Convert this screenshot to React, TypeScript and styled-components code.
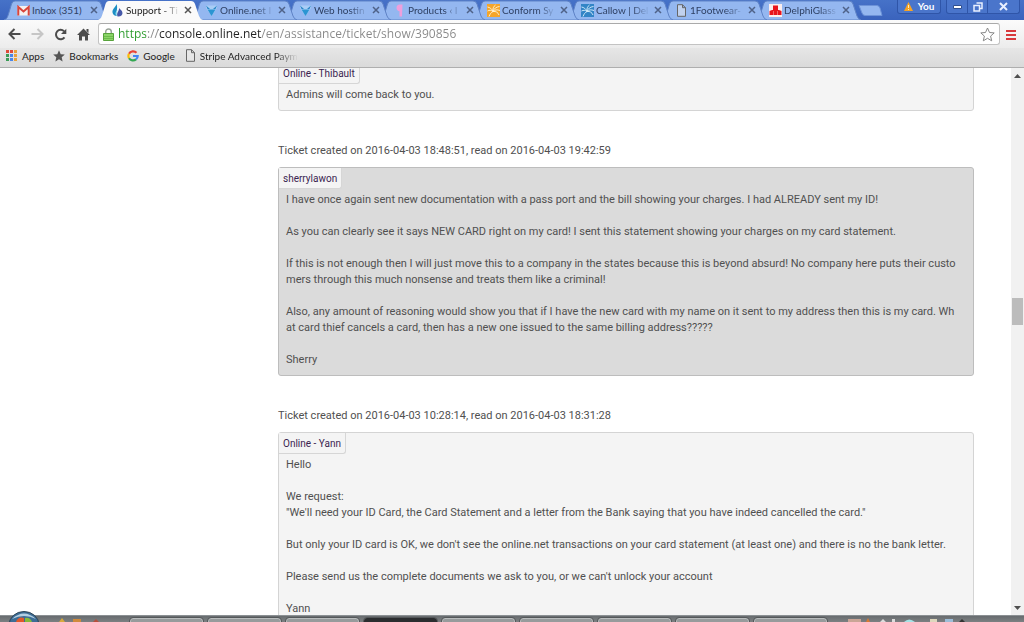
import React from "react";
import styled, { createGlobalStyle } from "styled-components";

const GlobalStyle = createGlobalStyle`
  * { box-sizing: border-box; }
  body { margin: 0; background: #fff; font-family: Lato, "Open Sans", sans-serif; }
  button { border: 0; padding: 0; background: none; font: inherit; color: inherit; }
`;

const Screen = styled.div`
  display: flex;
  flex-direction: column;
  height: 100vh;
  overflow: hidden;
`;

/* ---------- tab strip ---------- */

const TabStrip = styled.header`
  display: flex;
  flex: none;
  height: 20px;
  padding-left: 4px;
  background: linear-gradient(#4672c8, #3a63bd);
`;

const TabList = styled.div`
  display: flex;
  isolation: isolate;
`;

const TabItem = styled.div<{ $active?: boolean; $level: number }>`
  position: relative;
  z-index: ${(p) => (p.$active ? 20 : p.$level)};
  display: flex;
  align-items: center;
  flex: none;
  width: 106px;
  height: 20px;
  margin-right: -12px;
  padding: 0 10px 0 13px;
  color: ${(p) => (p.$active ? "#222" : "#2f4164")};
`;

const TabShape = styled.svg`
  position: absolute;
  inset: 0;
  z-index: -1;
`;

const Favicon = styled.svg`
  flex: none;
  width: 13px;
  height: 13px;
`;

const TabTitle = styled.button<{ $faded: boolean }>`
  flex: 1;
  min-width: 0;
  margin-left: 2px;
  white-space: nowrap;
  text-align: left;
  font-size: 10px;
  line-height: 16px;
  ${(p) => p.$faded && "mask-image: linear-gradient(90deg, #000 36px, transparent 54px);"}
`;

const CloseButton = styled.button`
  display: flex;
  flex: none;
  padding: 2px;
`;

const NewTab = styled.button`
  display: flex;
  align-self: flex-start;
  margin: 5px 0 0 8px;
`;

const WindowControls = styled.div`
  display: flex;
  align-items: flex-start;
  gap: 5px;
  margin-left: auto;
  padding-right: 4px;
`;

const ControlGroup = styled.div`
  display: flex;
  height: 14px;
  border: 1px solid #2f55a8;
  border-top: 0;
  border-radius: 0 0 3px 3px;
  background: #4a75cb;
`;

const ControlButton = styled.button<{ $width: number }>`
  display: flex;
  align-items: center;
  justify-content: center;
  gap: 5px;
  width: ${(p) => p.$width}px;
  height: 13px;
  color: #fff;
  font-size: 10px;
  font-weight: 700;
  line-height: 13px;

  & + & { border-left: 1px solid #2f55a8; }
`;

/* ---------- toolbar ---------- */

const Toolbar = styled.div`
  display: flex;
  align-items: center;
  flex: none;
  height: 28px;
  padding: 0 6px 0 3px;
  background: linear-gradient(#fbfbfb, #ececec);
`;

const ToolButton = styled.button`
  display: flex;
  align-items: center;
  justify-content: center;
  flex: none;
  width: 23px;
  height: 20px;
`;

const AddressBar = styled.label`
  display: flex;
  align-items: center;
  flex: 1;
  height: 22px;
  margin: 0 5px 0 3px;
  padding: 0 4px;
  border: 1px solid #c3c3c3;
  border-top-color: #aaa;
  border-radius: 3px;
  background: #fff;
`;

const UrlInput = styled.input`
  flex: 1;
  min-width: 0;
  margin: 0 0 0 4px;
  padding: 0;
  border: 0;
  outline: 0;
  font-family: "Open Sans", sans-serif;
  font-size: 12px;
  line-height: 18px;
  color: transparent;
  background: linear-gradient(90deg, #2a9a2a 28px, #888 28px 40px, #222 40px 143px, #888 143px);
  background-clip: text;
`;

const BookmarksBar = styled.nav`
  display: flex;
  align-items: center;
  flex: none;
  gap: 9px;
  height: 20px;
  padding: 0 6px 4px;
  border-bottom: 1px solid #aeaeae;
  background: linear-gradient(#e6e6e6, #dadada);
`;

const Bookmark = styled.a<{ $faded?: boolean }>`
  display: flex;
  align-items: center;
  gap: 4px;
  font-size: 10px;
  line-height: 14px;
  color: #222;
  text-decoration: none;
  white-space: nowrap;
  ${(p) => p.$faded && "mask-image: linear-gradient(90deg, #000 80%, transparent 100%);"}
`;

/* ---------- page ---------- */

const Viewport = styled.div`
  display: flex;
  flex: 1;
  min-height: 0;
`;

const Page = styled.main`
  flex: 1;
  min-width: 0;
  overflow: hidden;
  padding: 0 37px 0 278px;
  font-family: Roboto, sans-serif;
`;

const Thread = styled.div`
  display: flex;
  flex-direction: column;
  margin-top: -6px;
`;

const TicketDate = styled.p`
  margin: 32px 0 8px;
  font-size: 11px;
  line-height: 16px;
  color: #505050;
`;

const Message = styled.article<{ $own?: boolean }>`
  display: flex;
  flex-direction: column;
  align-items: flex-start;
  gap: 3px;
  padding-bottom: 7px;
  border: 1px solid ${(p) => (p.$own ? "#bdbdbd" : "#d4d4d4")};
  border-radius: 3px;
  background: ${(p) => (p.$own ? "#dbdbdb" : "#f4f4f4")};
`;

const Author = styled.h2`
  height: 21px;
  margin: 0;
  padding: 0 4px;
  border: solid #d6d6d6;
  border-width: 0 1px 1px 0;
  border-radius: 0 0 3px 0;
  background: #f4f4f4;
  font-size: 10px;
  font-weight: 400;
  line-height: 21px;
  color: #3a2450;
`;

const Body = styled.p`
  margin: 0;
  padding: 0 7px;
  font-size: 11px;
  line-height: 16px;
  color: #505050;
  white-space: pre;
`;

const Scrollbar = styled.div`
  display: flex;
  flex-direction: column;
  align-items: center;
  flex: none;
  width: 13px;
  padding: 6px 0 5px;
  background: #f1f1f1;
`;

const Thumb = styled.div`
  width: 11px;
  height: 27px;
  background: #bcbcbc;
`;

const Track = styled.div<{ $grow: number }>`
  flex: ${(p) => p.$grow};
`;

/* ---------- taskbar ---------- */

const Taskbar = styled.footer`
  position: relative;
  display: flex;
  flex: none;
  gap: 5px;
  height: 7px;
  padding: 2px 0 0 130px;
  border-top: 1px solid #8b9093;
  background: linear-gradient(#686c6f, #7c8082);
`;

const TaskButton = styled.button<{ $dark?: boolean }>`
  flex: none;
  width: 73px;
  height: 6px;
  border: 1px solid ${(p) => (p.$dark ? "#2b2d2f" : "#b9bcbd")};
  border-bottom: 0;
  border-radius: 3px 3px 0 0;
  outline: 1px solid #54585a;
  background: ${(p) => (p.$dark ? "#2b2d2f" : "#979b9c")};
`;

const StartOrb = styled.svg`
  position: absolute;
  left: 8px;
  bottom: 0;
`;

const TaskIcons = styled.svg<{ $side: "left" | "right"; $offset: number }>`
  position: absolute;
  bottom: 0;
  ${(p) => p.$side}: ${(p) => p.$offset}px;
`;

/* ---------- drawings ---------- */

const palm = "M2 12.500C3 10 4 8.500 6 7.500M6 7.500C9 7 11 8.500 12 11M6 7.500C8 5.500 10 5.500 13 6.500M6 7.500C7 4.500 9 3 12.500 2.500M6 7.500C5.500 4.500 6.500 2.500 8.500 1M6 7.500C4.500 4.500 3 3.500 .5 3M6 7.500C4 6 2.500 6 .5 7";

const icons: Record<string, React.ReactNode> = {
  gmail: (
    <>
      <path d="M0.5 2h12v9.500h-12z" fill="#f4f0f0" />
      <path d="M1.300 11.500V3L6.500 7.500L11.700 3v8.500" fill="none" stroke="#d9453b" strokeWidth="2" />
    </>
  ),
  drop: (
    <>
      <path d="M5.500 0C5 3 1 5 1.500 8.500c.3 2.500 2.500 3.500 4.500 3.500C4 9 7.500 5 5.500 0z" fill="#1d8fc4" />
      <path d="M8 4c.5 3-3 4.500-1.500 8.500C10 12.800 11.500 11 11.500 9 11.400 7 9.500 5.500 8 4z" fill="#4558a8" />
      <path d="M6.500 6c0 2-1.500 3-.5 6-2.500-2-1.500-4 .5-6z" fill="#8fe0f5" />
    </>
  ),
  triangle: (
    <>
      <path d="M1 1.500L12 1.500 12 4 6.500 12 1 4z" fill="#a9cdf5" />
      <path d="M1 1.500l4 3.500H2.500z M12 1.500l-4 3.500h2.500z" fill="#2a86c6" />
      <path d="M2.500 5.500h8L6.500 12z" fill="#2b95d2" />
    </>
  ),
  pink: <path d="M9.500 0.500H7C4.500.5 3.500 2 3.500 4s1.500 3 3 3.300V12.500h2.500z" fill="#ee9fdc" />,
  palmOrange: (
    <>
      <path d="M0 0h13v13H0z" fill="#f5a52a" />
      <path d={palm} stroke="#fff0cc" fill="none" />
    </>
  ),
  palmBlue: (
    <>
      <path d="M0 0h13v13H0z" fill="#3385c6" />
      <path d={palm} stroke="#cfe8f8" fill="none" />
    </>
  ),
  page: <path d="M2.500 .7h5l3 3v8.600h-8z M7.500.7v3h3" fill="#ececec" fillOpacity=".5" stroke="#666" />,
  cubes: (
    <>
      <path d="M0 0h13v13H0z" fill="#fbeeee" />
      <path d="M4 1.500h5V6H4z M.5 7L3 6h7l2.500 1v4h-12z" fill="#e8141c" />
      <path d="M4.500 7v4M8.500 7v4" stroke="#f7a0a0" strokeWidth=".6" />
    </>
  ),
};

const tabs = [
  { title: "Inbox (351)", icon: "gmail" },
  { title: "Support - Ti", icon: "drop", active: true },
  { title: "Online.net I", icon: "triangle" },
  { title: "Web hostin", icon: "triangle" },
  { title: "Products ‹ I", icon: "pink" },
  { title: "Conform Sy", icon: "palmOrange" },
  { title: "Callow | Del", icon: "palmBlue" },
  { title: "1Footwear-", icon: "page" },
  { title: "DelphiGlass", icon: "cubes" },
];

const messages = [
  { author: "Online - Thibault", text: "Admins will come back to you." },
  {
    date: "Ticket created on 2016-04-03 18:48:51, read on 2016-04-03 19:42:59",
    author: "sherrylawon",
    own: true,
    text: `I have once again sent new documentation with a pass port and the bill showing your charges. I had ALREADY sent my ID!

As you can clearly see it says NEW CARD right on my card! I sent this statement showing your charges on my card statement.

If this is not enough then I will just move this to a company in the states because this is beyond absurd! No company here puts their custo
mers through this much nonsense and treats them like a criminal!

Also, any amount of reasoning would show you that if I have the new card with my name on it sent to my address then this is my card. Wh
at card thief cancels a card, then has a new one issued to the same billing address?????

Sherry`,
  },
  {
    date: "Ticket created on 2016-04-03 10:28:14, read on 2016-04-03 18:31:28",
    author: "Online - Yann",
    text: `Hello

We request:
"We'll need your ID Card, the Card Statement and a letter from the Bank saying that you have indeed cancelled the card."

But only your ID card is OK, we don't see the online.net transactions on your card statement (at least one) and there is no the bank letter.

Please send us the complete documents we ask to you, or we can't unlock your account

Yann`,
  },
];

const appColors = ["#dd4b39", "#dd4b39", "#e9a23b", "#3a9c57", "#4a86e8", "#e9a23b", "#3a9c57", "#4a86e8", "#e9a23b"];

function BrowserTabs() {
  return (
    <TabStrip>
      <TabList role="tablist">
        {tabs.map((tab, i) => (
          <TabItem key={tab.title} $active={tab.active} $level={10 - i}>
            <TabShape width="106" height="20" aria-hidden="true">
              <path
                d="M0 20C3 19 3.500 17 4.500 14L7.500 4Q8.500 1 11 1H93Q96 1 97 4L101 16Q102 19 105 20Z"
                fill={tab.active ? "#fafafa" : "#94b7f0"}
                stroke={tab.active ? "#fafafa" : "#5f83c6"}
                strokeWidth={tab.active ? 0 : 1}
              />
            </TabShape>
            <Favicon viewBox="0 0 13 13">{icons[tab.icon]}</Favicon>
            <TabTitle role="tab" aria-selected={!!tab.active} $faded={i > 0}>{tab.title}</TabTitle>
            <CloseButton aria-label={`Close ${tab.title}`}>
              <svg width="8" height="8"><path d="M1 1l6 6M7 1L1 7" stroke={tab.active ? "#555" : "#4f6288"} strokeWidth="1.500" /></svg>
            </CloseButton>
          </TabItem>
        ))}
      </TabList>
      <NewTab aria-label="New tab">
        <svg width="25" height="11"><path d="M1 .5H19Q21 .5 22 3L24 10.500H7Q5 10.500 4 8Z" fill="#94b7f0" stroke="#6d93d8" /></svg>
      </NewTab>
      <WindowControls>
        <ControlGroup>
          <ControlButton $width={42}>
            <svg width="9" height="9"><path d="M4.500 0L9 9H0z" fill="#f7a325" /><path d="M4.500 3v3M4.500 7v1" stroke="#fff0c0" /></svg>
            You
          </ControlButton>
        </ControlGroup>
        <ControlGroup>
          <ControlButton $width={20} aria-label="Minimize">
            <svg width="9" height="4"><path d="M.5.5h8v3h-8z" fill="#fff" stroke="#2f4f90" /></svg>
          </ControlButton>
          <ControlButton $width={20} aria-label="Restore">
            <svg width="10" height="10"><path d="M3.500 1H9v5.500H7M1 3.500h5.500V9H1z" fill="none" stroke="#e9f0ff" strokeWidth="1.500" /></svg>
          </ControlButton>
          <ControlButton $width={32} aria-label="Close window">
            <svg width="9" height="9"><path d="M1 1l7 7M8 1L1 8" stroke="#e9f0ff" strokeWidth="2" /></svg>
          </ControlButton>
        </ControlGroup>
      </WindowControls>
    </TabStrip>
  );
}

export default function App() {
  return (
    <Screen>
      <GlobalStyle />
      <BrowserTabs />
      <Toolbar>
        <ToolButton aria-label="Back">
          <svg width="13" height="12"><path d="M12.500 6H2M6.500 1L1.500 6l5 5" fill="none" stroke="#4c4c4c" strokeWidth="2" /></svg>
        </ToolButton>
        <ToolButton aria-label="Forward">
          <svg width="13" height="12"><path d="M.5 6H11M6.500 1l5 5-5 5" fill="none" stroke="#c6c6c6" strokeWidth="2" /></svg>
        </ToolButton>
        <ToolButton aria-label="Reload">
          <svg width="13" height="13"><path d="M10.500 9.300A4.700 4.700 0 1 1 10 3.200" fill="none" stroke="#4c4c4c" strokeWidth="2" /><path d="M12.300 .8V6H7z" fill="#4c4c4c" /></svg>
        </ToolButton>
        <ToolButton aria-label="Home">
          <svg width="13" height="13"><path d="M6.500 .5L13 7h-2v5.500H8V8.500H5v4H2V7H0zM9.500 1H11.500v4l-2-2z" fill="#4c4c4c" /></svg>
        </ToolButton>
        <AddressBar>
          <svg width="11" height="13" aria-hidden="true">
            <path d="M2.700 6V3.800a2.800 2.800 0 0 1 5.600 0V6" fill="none" stroke="#9aa49a" strokeWidth="1.500" />
            <path d="M.5 5.500h10v7H.5z" fill="#8bd468" stroke="#58a33c" />
            <path d="M1 8.500h9M1 10.500h9" stroke="#6dbb4c" />
          </svg>
          <UrlInput aria-label="Address" defaultValue="https://console.online.net/en/assistance/ticket/show/390856" />
          <svg width="15" height="15" aria-hidden="true">
            <path d="M7.500 1l2 4.500 4.700.4-3.600 3.200 1.100 4.700-4.200-2.500-4.200 2.500 1.100-4.700L.8 5.900l4.700-.4z" fill="#fff" stroke="#888" />
          </svg>
        </AddressBar>
        <button aria-label="Menu">
          <svg width="13" height="12"><path d="M1 2h10M1 6h10M1 10h10" stroke="#d8393c" strokeWidth="2" /></svg>
        </button>
      </Toolbar>
      <BookmarksBar>
        <Bookmark href="#apps">
          <svg width="12" height="12">
            {appColors.map((c, i) => <rect key={i} x={(i % 3) * 4} y={Math.floor(i / 3) * 4} width="3" height="3" fill={c} />)}
          </svg>
          Apps
        </Bookmark>
        <Bookmark href="#bookmarks">
          <svg width="12" height="12"><path d="M6 .3l1.700 3.900 4.100.4-3.100 2.700.9 4.200L6 9.300l-3.600 2.200.9-4.200L.2 4.600l4.100-.4z" fill="#555" /></svg>
          Bookmarks
        </Bookmark>
        <Bookmark href="#google">
          <svg width="12" height="12" fill="none" strokeWidth="2.200">
            <path d="M9.500 2.700A4.700 4.700 0 0 0 2 3.800" stroke="#ea4335" />
            <path d="M2 3.800a4.700 4.700 0 0 0 0 4.400" stroke="#fbbc05" />
            <path d="M2 8.200a4.700 4.700 0 0 0 7 1.200" stroke="#34a853" />
            <path d="M9 9.400A4.500 4.500 0 0 0 10.700 6H6" stroke="#4285f4" />
          </svg>
          Google
        </Bookmark>
        <Bookmark href="#stripe" $faded>
          <svg width="12" height="13">{icons.page}</svg>
          Stripe Advanced Paym
        </Bookmark>
      </BookmarksBar>
      <Viewport>
        <Page>
          <Thread>
            {messages.map((m) => (
              <React.Fragment key={m.author}>
                {m.date && <TicketDate>{m.date}</TicketDate>}
                <Message $own={m.own}>
                  <Author>{m.author}</Author>
                  <Body>{m.text}</Body>
                </Message>
              </React.Fragment>
            ))}
          </Thread>
        </Page>
        <Scrollbar aria-hidden="true">
          <svg width="7" height="4"><path d="M3.500 0L7 4H0z" fill="#505050" /></svg>
          <Track $grow={220} />
          <Thumb />
          <Track $grow={280} />
          <svg width="7" height="4"><path d="M0 0h7L3.500 4z" fill="#505050" /></svg>
        </Scrollbar>
      </Viewport>
      <Taskbar>
        <StartOrb width="32" height="11" aria-hidden="true">
          <ellipse cx="16" cy="14" rx="15" ry="13.500" fill="#3d6d96" stroke="#2c4356" />
          <path d="M4 8Q16 -3 28 8Q16 2 4 8z" fill="#b4cfe2" />
          <path d="M8 11Q10 5 16 7v4z" fill="#e2582a" />
          <path d="M17 7q5-1 7 4h-7z" fill="#86b93a" />
        </StartOrb>
        <TaskIcons width="50" height="4" $side="left" $offset={56} aria-hidden="true">
          <path d="M3 4l3-4 3 4z" fill="#d8a93c" /><path d="M17 1h8v3h-8z" fill="#d08a3c" /><path d="M37 4l3-3 3 3z" fill="#b5503c" />
        </TaskIcons>
        {Array.from({ length: 9 }, (_, i) => (
          <TaskButton key={i} $dark={i === 3} aria-label={`Window ${i + 1}`} />
        ))}
        <TaskIcons width="130" height="4" $side="right" $offset={48} aria-hidden="true">
          <path d="M2 1h13v3H2z" fill="#c9a596" /><path d="M20 4l2-4 2 4z" fill="#d87a34" /><path d="M34 4l3-3 3 3zM46 1h3v3h-3z" fill="#dcdcdc" />
          <path d="M58 4q5-5 11 0z" fill="#a5e3e6" /><path d="M84 1h7v3h-7z" fill="#ddd7bd" /><path d="M99 1h8v3h-8z" fill="#9dbdd8" /><path d="M113 4l3-3 3 3z" fill="#333" />
        </TaskIcons>
      </Taskbar>
    </Screen>
  );
}
